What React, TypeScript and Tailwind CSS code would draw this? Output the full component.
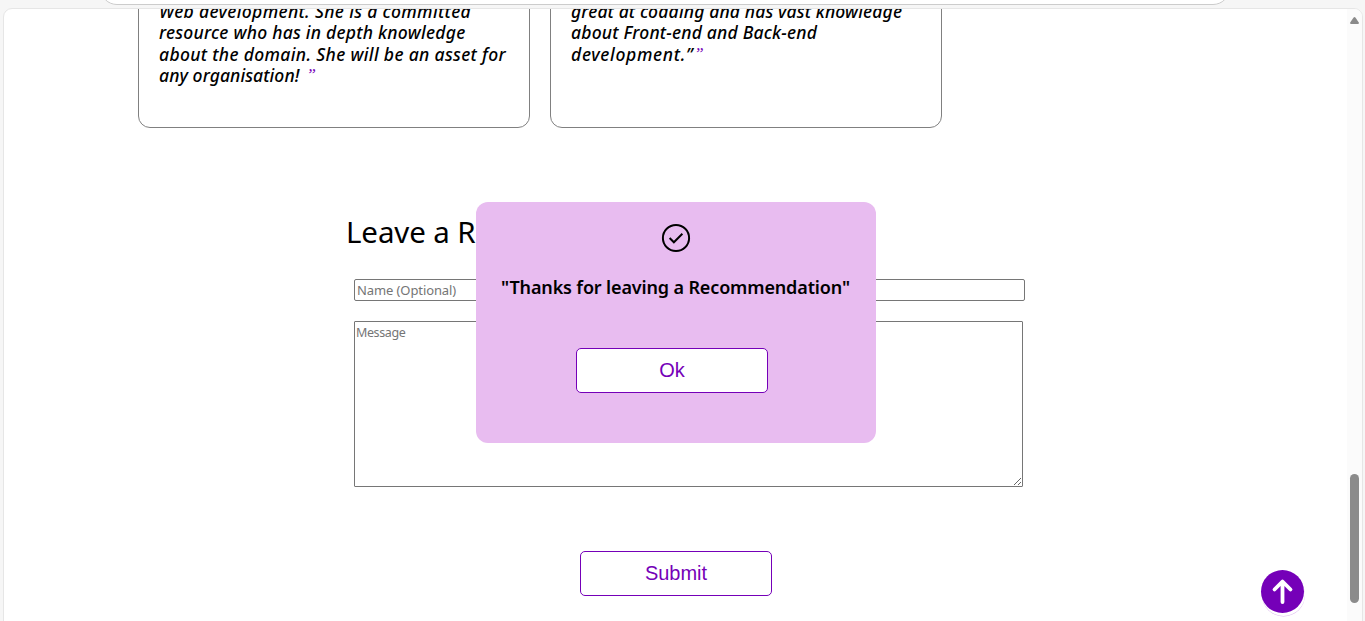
type Line = { text: string; className: string; quote?: boolean };

const left: Line[] = [
  { text: "Web development. She is a committed", className: "tracking-[0.35px]" },
  { text: "resource who has in depth knowledge", className: "tracking-[0.25px]" },
  { text: "about the domain. She will be an asset for", className: "tracking-[0.34px]" },
  { text: "any organisation!", className: "mr-[7px] tracking-[0.08px]", quote: true },
];

const right: Line[] = [
  { text: "great at codding and has vast knowledge", className: "tracking-[0.14px]" },
  { text: "about Front-end and Back-end", className: "tracking-[0.2px]" },
  { text: "development.”", className: "mr-[1px] tracking-[0.68px]", quote: true },
];

function Card({ lines }: { lines: Line[] }) {
  return (
    <article className="flex h-[219px] w-[392px] flex-col rounded-[12px] border border-[#808080] bg-white pl-[20px] pt-[91px] text-[17.5px] font-medium italic leading-[21.3px]">
      {lines.map((line) => (
        <p key={line.text} className="flex whitespace-nowrap">
          <span className={line.className}>{line.text}</span>
          {line.quote && (
            <span className="-mt-[1px] font-['Liberation_Serif',serif] text-[17px] font-normal text-[#7500b8]">”</span>
          )}
        </p>
      ))}
    </article>
  );
}

function OutlineButton({ label }: { label: string }) {
  return (
    <button
      type="button"
      className="block h-[45px] w-[192px] rounded-[5px] border border-[#7500b8] bg-white pb-[2px] font-['Liberation_Sans',sans-serif] text-[20px] text-[#7500b8]"
    >
      {label}
    </button>
  );
}

function Dialog() {
  return (
    <div
      role="dialog"
      className="absolute left-[472px] top-[193px] flex h-[241px] w-[400px] flex-col items-center rounded-[12px] bg-[#e8bcf0] pt-[19px]"
    >
      <svg className="size-[34px]" viewBox="0 0 24 24" fill="none" stroke="currentColor" strokeWidth="1.4">
        <circle cx="12" cy="12" r="9.25" />
        <path d="M7.5 12 L10.5 15 L16.5 9" />
      </svg>
      <p className="mr-[1px] mt-[17px] whitespace-nowrap text-[18px] font-semibold leading-[30px] tracking-[-0.14px]">
        "Thanks for leaving a Recommendation"
      </p>
      <div className="mr-[8px] mt-[46px]">
        <OutlineButton label="Ok" />
      </div>
    </div>
  );
}

export default function App() {
  return (
    <div className="flex h-[621px] w-[1365px] flex-col overflow-hidden bg-[#f6f6f6] font-['Noto_Sans',sans-serif] text-black">
      <header className="flex h-[8px] shrink-0 items-end pl-[100px]">
        <div className="mb-[3px] h-[5px] w-[1130px] overflow-hidden">
          <div className="-mt-[29px] h-[34px] rounded-full border border-[#cccccc] bg-white" />
        </div>
      </header>

      <div className="ml-[3px] flex h-[640px] w-[1360px] shrink-0 overflow-hidden rounded-t-[9px] border border-[#e6e6e6] bg-white">
        <main className="relative h-[612px] w-[1343px] shrink-0 overflow-hidden">
          <section className="-mt-[100px] flex gap-[20px] pl-[134px]">
            <Card lines={left} />
            <Card lines={right} />
          </section>

          <form className="pl-[350px]">
            <h2 className="-ml-[8px] mt-[84px] whitespace-nowrap text-[29.5px] leading-[40px] tracking-[-0.1px]">
              Leave a Recommendation
            </h2>
            <input
              placeholder="Name (Optional)"
              className="mt-[27px] block h-[22px] w-[671px] rounded-[2px] border border-[#767676] bg-white px-[2px] text-[13px] tracking-[-0.1px] placeholder:text-[#757575]"
            />
            <textarea
              placeholder="Message"
              className="mt-[20px] block h-[166px] w-[669px] resize rounded-[1px] border border-[#767676] bg-white px-[1px] pt-[2px] text-[12.5px] leading-[17px] tracking-[-0.4px] placeholder:text-[#757575]"
            />
            <div className="ml-[226px] mt-[64px]">
              <OutlineButton label="Submit" />
            </div>
          </form>

          <Dialog />

          <button
            type="button"
            aria-label="Back to top"
            className="absolute left-[1257px] top-[561px] size-[43px] rounded-full bg-[#7500b8] shadow-[1px_3px_0_0_#ffffff,1px_3.5px_0_0_#dcb8ee]"
          >
            <svg className="size-[43px]" viewBox="0 0 43 43" fill="none" stroke="white" strokeWidth="3.8" strokeLinecap="round" strokeLinejoin="round">
              <path d="M21.5 32 V12 M13.5 19.5 L21.5 11.5 L29.5 19.5" />
            </svg>
          </button>
        </main>

        <aside className="flex w-[15px] flex-col items-center bg-[#fbfbfb] pt-[8px]">
          <svg className="h-[7px] w-[9px]" viewBox="0 0 9 7" fill="#8a8a8a">
            <path d="M3.6 0.5 Q4.5 -0.4 5.4 0.5 L8.8 5.4 Q9.2 7 8 7 H1 Q-0.2 7 0.2 5.4 Z" />
          </svg>
          <div className="mt-[450px] h-[129px] w-[9px] rounded-full bg-[#8b8b8b]" />
        </aside>
      </div>
    </div>
  );
}
